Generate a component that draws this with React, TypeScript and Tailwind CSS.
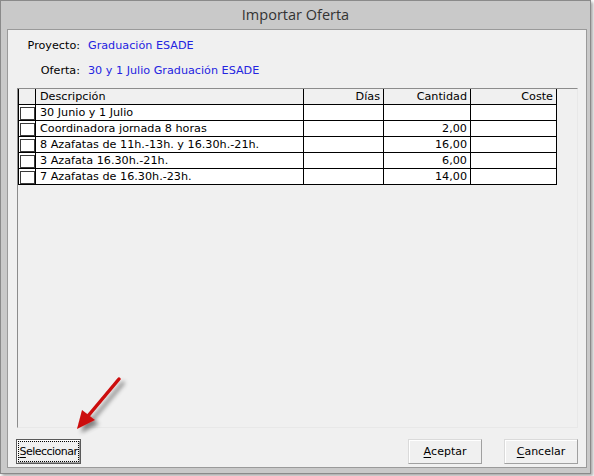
import React from 'react';

type Linea = { desc: string; dias: string; cant: string; coste: string };

const lineas: Linea[] = [
  { desc: '30 Junio y 1 Julio', dias: '', cant: '', coste: '' },
  { desc: 'Coordinadora jornada 8 horas', dias: '', cant: '2,00', coste: '' },
  { desc: '8 Azafatas de 11h.-13h. y 16.30h.-21h.', dias: '', cant: '16,00', coste: '' },
  { desc: '3 Azafata 16.30h.-21h.', dias: '', cant: '6,00', coste: '' },
  { desc: '7 Azafatas de 16.30h.-23h.', dias: '', cant: '14,00', coste: '' },
];

const cell = 'h-[16px] border-r border-b border-black leading-[16px] whitespace-nowrap overflow-hidden';

const Boton = ({ label, width, focused }: { label: string; width: string; focused?: boolean }) => (
  <button
    className={
      focused
        ? `${width} h-[25px] border border-[#5a5a5a] bg-[#f0f0f0] p-[1px] shadow-[inset_1px_1px_0_#fff,inset_-1px_-1px_0_#a0a0a0]`
        : `${width} h-[25px] border border-[#dadada] border-r-[#a0a0a0] border-b-[#a0a0a0] bg-[#f0f0f0] shadow-[inset_1px_1px_0_#fff]`
    }
  >
    <span
      className={
        focused
          ? 'flex h-full w-full items-center justify-center border border-dotted border-black leading-none tracking-[-0.5px] text-[11px]'
          : 'flex h-full w-full items-center justify-center leading-none text-[11px]'
      }
    >
      <span className="underline underline-offset-[2px]">{label[0]}</span>
      {label.slice(1)}
    </span>
  </button>
);

const Flecha = () => (
  <svg className="absolute left-0 top-0 pointer-events-none" width="594" height="476">
    <defs>
      <filter id="sombra" x="-50%" y="-50%" width="200%" height="200%">
        <feDropShadow dx="4" dy="4" stdDeviation="2" floodColor="#000" floodOpacity="0.45" />
      </filter>
    </defs>
    <g filter="url(#sombra)">
      <line x1="119" y1="379" x2="88" y2="416" stroke="#cc0a0a" strokeWidth="3.5" strokeLinecap="round" />
      <polygon points="77,429 82,410 95,420" fill="#cc0a0a" />
    </g>
  </svg>
);

export default function App() {
  return (
    <div
      className="relative w-[594px] h-[476px] bg-white text-[11.2px] text-black"
      style={{ fontFamily: '"DejaVu Sans", Verdana, sans-serif' }}
    >
      <div className="w-[591px] h-[474px] border border-[#8a8a8a] bg-[#c9c9c9] pl-[6px] pr-[3px] shadow-[2px_2px_3px_rgba(0,0,0,0.35)] flex flex-col">
        <div
          className="h-[28px] flex items-center justify-center pr-[3px] text-[14.5px] text-[#333]"
          style={{ fontFamily: '"Open Sans", "Noto Sans", sans-serif' }}
        >
          Importar Oferta
        </div>

        <div className="w-[580px] h-[439px] border border-[#9a9a9a] bg-[#f0f0f0] flex flex-col">
          <div className="mt-[8px] flex items-center h-[16px]">
            <span className="w-[72px] text-right">Proyecto:</span>
            <span className="ml-[8px] text-[#2424e0]">Graduación ESADE</span>
          </div>
          <div className="mt-[9px] flex items-center h-[16px]">
            <span className="w-[72px] text-right">Oferta:</span>
            <span className="ml-[8px] text-[#2424e0]">30 y 1 Julio Graduación ESADE</span>
          </div>

          <div className="mt-[9px] ml-[9px] w-[561px] h-[340px] border border-[#8c8c8c] border-r-[#e8e8e8] border-b-[#e8e8e8]">
            <div className="w-[539px] border-l border-black grid grid-cols-[17px_268px_80px_87px_86px]">
              <div className={`${cell} bg-[#f0f0f0]`} />
              <div className={`${cell} bg-[#f0f0f0] pl-[4px]`}>Descripción</div>
              <div className={`${cell} bg-[#f0f0f0] text-right pr-[3px]`}>Días</div>
              <div className={`${cell} bg-[#f0f0f0] text-right pr-[3px]`}>Cantidad</div>
              <div className={`${cell} bg-[#f0f0f0] text-right pr-[3px]`}>Coste</div>
              {lineas.map((l) => (
                <React.Fragment key={l.desc}>
                  <div className={`${cell} bg-white pl-[1px] pt-[2px]`}>
                    <div className="w-[15px] h-[13px] border border-[#3a3a3a] bg-white" />
                  </div>
                  <div className={`${cell} bg-white pl-[4px]`}>{l.desc}</div>
                  <div className={`${cell} bg-white text-right pr-[3px]`}>{l.dias}</div>
                  <div className={`${cell} bg-white text-right pr-[3px]`}>{l.cant}</div>
                  <div className={`${cell} bg-white text-right pr-[3px]`}>{l.coste}</div>
                </React.Fragment>
              ))}
            </div>
          </div>

          <div className="mt-[11px] flex items-center px-[8px]">
            <Boton label="Seleccionar" width="w-[65px]" focused />
            <div className="ml-auto flex gap-[22px]">
              <Boton label="Aceptar" width="w-[74px]" />
              <Boton label="Cancelar" width="w-[74px]" />
            </div>
          </div>
        </div>
      </div>
      <Flecha />
    </div>
  );
}
